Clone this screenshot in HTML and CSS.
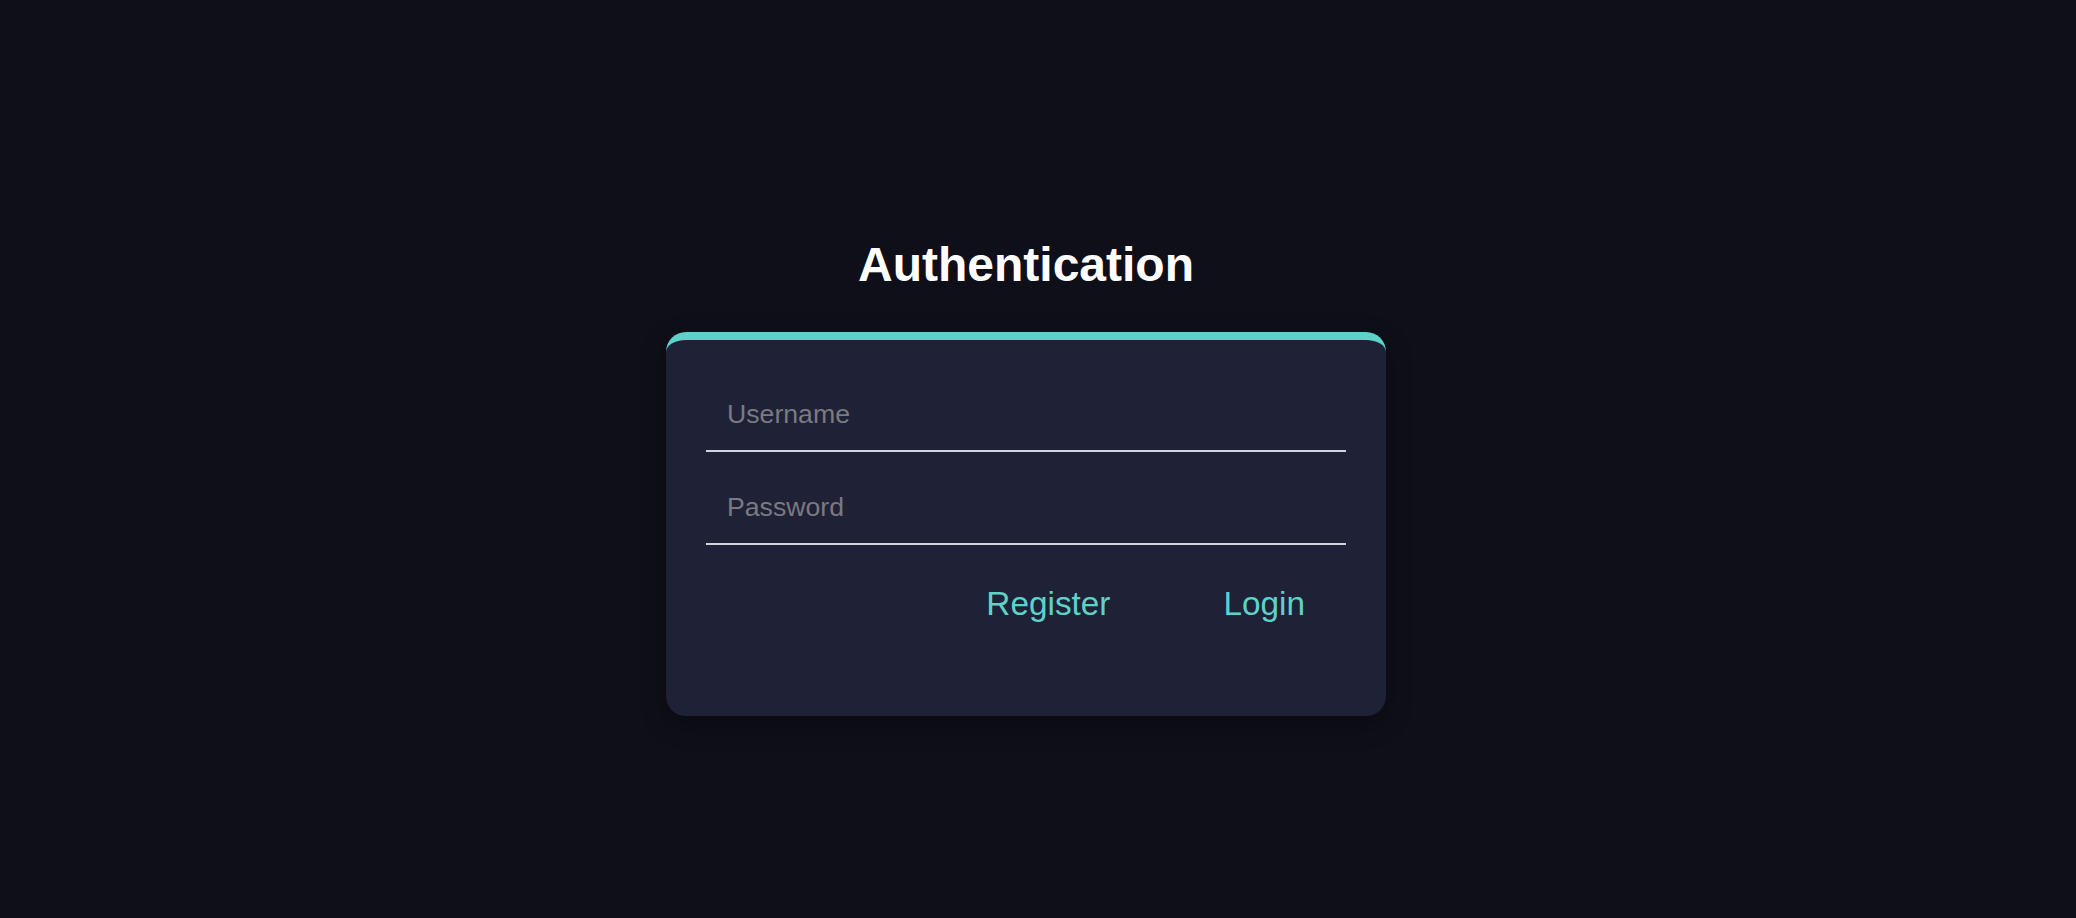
FILE: index.html
```html
<!DOCTYPE html>
<html lang="en">
<head>
<meta charset="utf-8">
<title>Authentication</title>
<link rel="stylesheet" href="styles.css">
</head>
<body>
<main class="page">
  <h1 class="title">Authentication</h1>
  <form class="card">
    <input class="field" type="text" placeholder="Username">
    <input class="field" type="password" placeholder="Password">
    <div class="actions">
      <button type="button" class="btn">Register</button>
      <button type="button" class="btn">Login</button>
    </div>
  </form>
</main>
</body>
</html>
```

FILE: styles.css
```css
* { box-sizing: border-box; }
html, body {
  margin: 0;
  padding: 0;
  background: #0f0f19;
  font-family: "Liberation Sans", Arial, sans-serif;
}
.page {
  min-height: 100vh;
  display: flex;
  flex-direction: column;
  align-items: center;
  padding: 237px 24px 0 0;
}
.title {
  margin: 0;
  font-size: 48px;
  line-height: 56px;
  font-weight: 700;
  color: #ffffff;
}
.card {
  margin-top: 39px;
  width: 720px;
  background: #1f2137;
  border-top: 8px solid #5ed2c9;
  border-radius: 20px;
  padding: 38px 40px 84px;
  display: flex;
  flex-direction: column;
  gap: 19px;
  box-shadow: 0 8px 24px rgba(0, 0, 0, 0.35);
}
.field {
  display: block;
  width: 100%;
  margin: 0;
  padding: 20px 21px;
  font-family: inherit;
  font-size: 26.67px;
  line-height: 32px;
  color: #e0e0e6;
  background: transparent;
  border: 0;
  border-bottom: 2px solid #d4d4dc;
  outline: none;
}
.field::placeholder { color: #7a7a80; }
.actions {
  margin-top: 12px;
  display: flex;
  justify-content: flex-end;
  gap: 73px;
  padding-right: 21px;
}
.btn {
  margin: 0;
  padding: 8px 20px;
  font-family: inherit;
  font-size: 33.33px;
  line-height: 40px;
  color: #5ed2c9;
  background: transparent;
  border: 0;
  cursor: pointer;
}
```
